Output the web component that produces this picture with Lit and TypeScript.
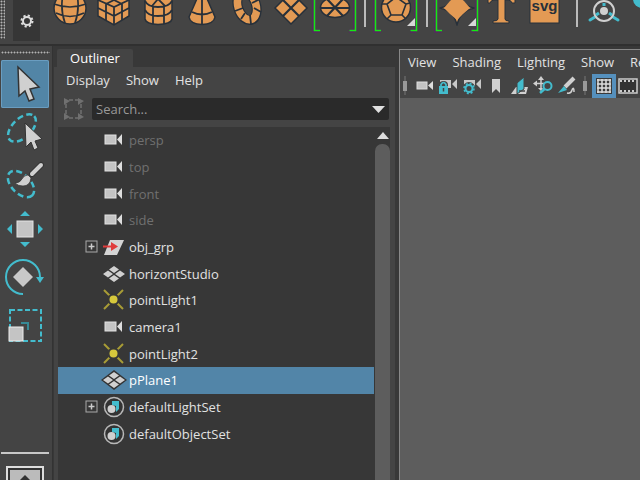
import { LitElement, html, svg, css, nothing, TemplateResult, SVGTemplateResult } from "lit";
import { customElement } from "lit/decorators.js";
import { classMap } from "lit/directives/class-map.js";

const OR = "#e39a54";
const EDGE = "#27303a";
const TEAL = "#43bccd";
const LIGHT = "#d0d0d0";

const icon = (w: number, h: number, body: SVGTemplateResult): TemplateResult =>
  html`<svg width=${w} height=${h} viewBox="0 0 ${w} ${h}" aria-hidden="true">${body}</svg>`;

const brackets = svg`
  <path d="M4 -2V31H10M39 31H45M45 31V-2" transform="translate(-2 0)" fill="none" stroke="#552b5c" stroke-width="4"/>
  <path d="M2.500 -2V30.500H8M37.500 30.500H43.500V-2" fill="none" stroke="#15e815" stroke-width="1.600"/>`;
const corner = svg`<path d="M41 18V26H33Z" fill="#d8d8d8"/>`;

const shelfArt: Record<string, SVGTemplateResult> = {
  Sphere: svg`<circle cx="22" cy="8" r="16" fill=${OR} stroke=${EDGE} stroke-width="1.500"/>
    <path d="M6 4Q22 10 38 4M8 13Q22 20 36 13M15 -6Q12 10 17 23M29 -6Q32 10 27 23" fill="none" stroke=${EDGE} stroke-width="1.700"/>`,
  Cube: svg`<path d="M6 0L22 -8L37 0V16L22 25L6 16Z" fill=${OR} stroke=${EDGE} stroke-width="1.500"/>
    <path d="M6 0L22 7L37 0M22 7V25M6 8L22 16L37 8M14 3V20M30 3V20M14 -4L30 4M30 -4L14 4" fill="none" stroke=${EDGE} stroke-width="1.800"/>`,
  Cylinder: svg`<path d="M9 -3H36V19Q35 24 22 24.500Q10 24 9 19Z" fill=${OR} stroke=${EDGE} stroke-width="1.500"/>
    <path d="M9 1Q12 7 22 7Q33 7 36 1M9 10Q12 16 22 16Q33 16 36 10M17 6V24M28 6V24M16 6L22 -1L29 6" fill="none" stroke=${EDGE} stroke-width="1.800"/>`,
  Cone: svg`<path d="M19 -6L9 17Q10 24 22 24.500Q34 24 35 17L25 -6Z" fill=${OR} stroke=${EDGE} stroke-width="1.500"/>
    <path d="M22 -3V24M12 12Q22 17 32 12" fill="none" stroke=${EDGE} stroke-width="1.800"/>`,
  Torus: svg`<ellipse cx="23" cy="6" rx="9" ry="14.500" transform="rotate(-18 23 6)" fill="none" stroke=${EDGE} stroke-width="10"/>
    <ellipse cx="23" cy="6" rx="9" ry="14" transform="rotate(-18 23 6)" fill="none" stroke=${OR} stroke-width="7.500"/>
    <path d="M11 11L19 8M19 -1L12 -3M26 15L27 24M30 8L37 12M28 3L36 -1M21 13L17 19" stroke=${EDGE} stroke-width="1.800"/>`,
  Plane: svg`<path d="M23 -8L39 8L23 24L7 8Z" fill=${OR} stroke=${EDGE} stroke-width="1.500"/>
    <path d="M15 0L31 16M31 0L15 16" stroke=${EDGE} stroke-width="2.200"/>`,
  Disc: svg`${brackets}<ellipse cx="23" cy="7.500" rx="14.500" ry="10" fill=${OR} stroke=${EDGE} stroke-width="1.500"/>
    <path d="M9 8H37M15 -1L31 16M31 -1L15 16" stroke=${EDGE} stroke-width="2.200"/>`,
  "Platonic solid": svg`<g transform="translate(-1 0)">${brackets}</g><circle cx="22" cy="7.500" r="14.500" fill=${OR} stroke=${EDGE} stroke-width="1.500"/>
    <path d="M22 -3L32 4L28 15H17L13 4ZM32 4L36 3M28 15L32 19M17 15L13 19M13 4L8 4M22 -2V-7" fill="none" stroke=${EDGE} stroke-width="1.600"/>${corner}`,
  "Super shape": svg`<g transform="translate(-2 0)">${brackets}</g>
    <path d="M21 -9Q24 5 38 8Q24 11 21 25Q18 11 4 8Q18 5 21 -9Z" fill=${OR} stroke=${EDGE} stroke-width="1.500" stroke-linejoin="round"/><path d="M21 -5L28 1L34 8L27 14L21 20L14 14L8 8L14 1Z" fill=${OR}/><g transform="translate(-1 0)">${corner}</g>`,
  Type: svg`<path d="M8 -5H35V3H32Q31 0 28 0H25V19Q25 21 29 21V23H13V21Q18 21 18 19V0H14Q11 0 10 3H8Z" fill=${OR} stroke=${EDGE}/>`,
  SVG: svg`<rect x="6" y="-6" width="29" height="29" fill=${OR} stroke=${EDGE}/><text x="20.500" y="11" text-anchor="middle" class="svgword">svg</text>`,
  Joint: svg`<path d="M4 20L9 17M27 17L32 20" stroke=${TEAL} stroke-width="3" stroke-linecap="round"/>
    <circle cx="18" cy="11" r="10" fill="none" stroke=${LIGHT} stroke-width="2"/><circle cx="18" cy="11" r="4" fill=${LIGHT}/>
    <path d="M10 15L13 13M23 13L26 15M18 3V6" stroke=${TEAL} stroke-width="3"/>`,
  Skin: svg`<circle cx="12" cy="-1" r="9" fill=${TEAL}/>`,
};

const shelf = ["Sphere", "Cube", "Cylinder", "Cone", "Torus", "Plane", "Disc", "|", "Platonic solid", "|", "Super shape", "Type", "SVG", "|", "Joint", "Skin"];

const OUT = "#333";
const tools: [string, SVGTemplateResult][] = [
  ["Select", svg`<path d="M17 7L18 36L24 31L28 41L33 39L29 29L38 27Z" fill=${LIGHT} stroke=${OUT} stroke-width="1.500"/>`],
  ["Lasso", svg`<ellipse cx="21" cy="20" rx="17" ry="9.500" transform="rotate(-44 21 20)" fill="none" stroke=${TEAL} stroke-width="2.500" stroke-dasharray="6 3.500"/>
    <path d="M24 15L25 39L30 34L33 42L37 40L34 33L41 31Z" fill=${LIGHT} stroke=${OUT}/>`],
  ["Paint select", svg`<ellipse cx="20" cy="28" rx="16" ry="9.500" transform="rotate(45 20 28)" fill="none" stroke=${TEAL} stroke-width="2.500" stroke-dasharray="6 3.500"/>
    <path d="M40 9L31 18" stroke=${OUT} stroke-width="6" stroke-linecap="round"/><path d="M40 9L31 18" stroke=${LIGHT} stroke-width="4" stroke-linecap="round"/>
    <path d="M27 19L30 22Q29 30 22 30Q17 30 14 27Q19 27 21 23Q23 19 27 19Z" fill=${LIGHT} stroke=${OUT} stroke-width=".7"/>`],
  ["Move", svg`<rect x="16" y="17" width="16" height="16" fill="#c4c4c4" stroke="#e4e4e4"/>
    <path d="M24 7L29 12H19ZM24 43L29 38H19ZM6 25L11 20V30ZM42 25L37 20V30Z" fill=${TEAL}/>`],
  ["Rotate", svg`<path d="M22 42A17 17 0 1 1 39 25" fill="none" stroke=${TEAL} stroke-width="2"/><path d="M35 25H43L39 31Z" fill=${TEAL}/>
    <path d="M22 15L32 25L22 35L12 25Z" fill="#c8c8c8"/>`],
  ["Scale", svg`<rect x="9" y="10" width="31" height="31" fill="none" stroke=${TEAL} stroke-width="2" stroke-dasharray="5 2.500"/>
    <path d="M20 23H27V30" fill="none" stroke="#378a96" stroke-width="2"/><rect x="8" y="27" width="14" height="14" fill="#c4c4c4" stroke="#eee"/>`],
];

const cam = svg`<rect x="2" y="5" width="11" height="9" fill="#c4c4c4" stroke="#e2e2e2"/><path d="M14 9.500L19 4V15Z" fill="#ddd"/>`;
const light = svg`<path d="M1 0L20 19M20 0L1 19" stroke="#a89c36" stroke-width="2"/><circle cx="10.500" cy="9.500" r="6" fill="#373737"/><circle cx="10.500" cy="9.500" r="4" fill="#d6c83c"/>`;
const tiles = svg`<path d="M11 2L16 5.500L11 9L6 5.500ZM11 11L16 14.500L11 18L6 14.500ZM5 6.500L10 10L5 13.500L0 10ZM17 6.500L22 10L17 13.500L12 10Z" fill=${LIGHT}/>`;
const art: Record<string, SVGTemplateResult> = {
  cam,
  light,
  mesh: tiles,
  meshOn: svg`<path d="M11 0L24 10L11 20L-2 10Z" fill="#333"/>${tiles}`,
  group: svg`<path d="M7 3H21L14 18H1Z" fill="#d4d4d4"/><path d="M0 9.500H9" stroke="#e03c3c" stroke-width="2"/><path d="M8 5L15 9.500L8 14Z" fill="#e03c3c"/>`,
  set: svg`<circle cx="11" cy="10" r="9.500" fill="#333" stroke="#b8b8b8" stroke-width="1.500"/><path d="M9 4H16V12L13 15V9L9 8Z" fill=${TEAL}/><circle cx="8.500" cy="12" r="4" fill=${LIGHT}/>`,
};

interface Node { name: string; kind: string; dim?: boolean; expand?: boolean; selected?: boolean; }
const nodes: Node[] = [
  { name: "persp", kind: "cam", dim: true },
  { name: "top", kind: "cam", dim: true },
  { name: "front", kind: "cam", dim: true },
  { name: "side", kind: "cam", dim: true },
  { name: "obj_grp", kind: "group", expand: true },
  { name: "horizontStudio", kind: "mesh" },
  { name: "pointLight1", kind: "light" },
  { name: "camera1", kind: "cam" },
  { name: "pointLight2", kind: "light" },
  { name: "pPlane1", kind: "meshOn", selected: true },
  { name: "defaultLightSet", kind: "set", expand: true },
  { name: "defaultObjectSet", kind: "set" },
];

const smallCam = svg`<path d="M4 6H15V14H4ZM16 10L21 5V15Z" fill="#c8c8c8"/>`;
const handle = html`<span class="handle">${icon(12, 24, svg`<path d="M5 2V21" stroke="#777"/><rect x="3" y="7" width="4" height="10" fill="#999"/>`)}</span>`;
const viewTools: [string, SVGTemplateResult][] = [
  ["Camera", svg`<rect x="5" y="8" width="10" height="7" fill="#c4c4c4" stroke="#ddd"/><path d="M16 11.500L21 7V16Z" fill="#ddd"/>`],
  ["Lock camera", svg`${smallCam}<path d="M3 20V11Q3 7 7.500 7Q12 7 12 11V20Z" fill="#444"/><path d="M5 12V10.500Q7.500 6.500 10 10.500V12" fill="none" stroke=${TEAL} stroke-width="1.700"/><rect x="3" y="12" width="9" height="8" fill=${TEAL}/><path d="M7.500 14V17.500" stroke="#444" stroke-width="1.500"/>`],
  ["Camera settings", svg`${smallCam}<circle cx="9" cy="14.500" r="6.500" fill="#444"/><circle cx="9" cy="14.500" r="3.500" fill="none" stroke=${TEAL} stroke-width="2"/><circle cx="9" cy="14.500" r="5" fill="none" stroke=${TEAL} stroke-width="1.500" stroke-dasharray="2 1.930"/>`],
  ["Bookmark", svg`<path d="M8 5H16V19L12 15L8 19Z" fill=${LIGHT}/>`],
  ["Image plane", svg`<path d="M3 20L8 13H20L18 20Z" fill=${LIGHT}/><path d="M9 9L16 3V15L9 20Z" fill=${TEAL} stroke="#444"/><path d="M11 17H17" stroke="#444" stroke-width="1.500"/>`],
  ["Pan and zoom", svg`<path d="M9 5V14M4 9.500H14" stroke=${LIGHT} stroke-width="1.500"/><path d="M9 2L12 6H6ZM1 9.500L5 6.500V12.500ZM9 17L6 14H11Z" fill=${LIGHT}/><circle cx="15.500" cy="12" r="4" fill="#444" stroke=${TEAL} stroke-width="2"/><path d="M12.500 15L8 19" stroke=${TEAL} stroke-width="2.500"/>`],
  ["Grease pencil", svg`<path d="M18 4L9 13" stroke=${LIGHT} stroke-width="4"/><path d="M8 12L11 16L2 19Z" fill=${TEAL}/><path d="M11 19Q15 20 16 16Q18 12 18 18" fill="none" stroke=${LIGHT} stroke-width="1.500"/>`],
];

@customElement("app-root")
export class AppRoot extends LitElement {
  static styles = css`
    :host { display: flex; flex-direction: column; height: 100vh; overflow: hidden; background: #383838; color: #e2e2e2; font: 13px/18px "Open Sans", "Noto Sans", sans-serif; }
    * { box-sizing: border-box; }
    svg { display: block; flex: none; overflow: visible; }
    button { display: grid; place-items: center; flex: none; padding: 0; border: 0; background: none; color: inherit; font: inherit; }
    .svgword { font: bold 15px "Liberation Sans", sans-serif; fill: #27303a; }
    .shelf { display: flex; flex: none; height: 44px; background: #444; overflow: hidden; }
    .grip { flex: none; width: 5px; height: 39px; background: radial-gradient(circle, #b4b4b4 30%, transparent 60%) 0 0 / 3px 3px; }
    .gear { width: 27px; height: 41px; margin: 0 8px; background: #363636; }
    .item { width: 44px; height: 32px; }
    .bar { flex: none; width: 2px; height: 27px; margin: 0 8px; background: #bbb; }
    .work { display: flex; flex: 1; min-height: 0; border-top: 2px solid #303030; }
    .toolbox { display: flex; flex-direction: column; flex: none; width: 53px; padding: 5px 0 0 1px; background: #444; border-right: 1px solid #333; }
    .dots { flex: none; height: 3px; margin: 0 2px 6px 0; background: radial-gradient(circle, #b4b4b4 30%, transparent 60%) 0 0 / 3px 3px; }
    .tool { width: 48px; height: 48px; border-radius: 2px; }
    .tool.on { background: #5285a6; box-shadow: inset 0 0 0 1px #6a9dc0; }
    .rule { flex: none; width: 48px; height: 2px; margin: 104px 0 12px; background: #c8c8c8; }
    .layout { width: 38px; height: 38px; margin-left: 5px; border: 2px solid #ddd; background: #333; }
    .outliner { display: flex; flex-direction: column; flex: 1 1 341px; min-width: 0; padding: 3px 0 0 1px; }
    .tab { align-self: flex-start; width: 76px; height: 18px; margin-left: 3px; background: #444; border-radius: 2px 2px 0 0; color: #fff; line-height: 18px; text-align: center; }
    .body { display: flex; flex-direction: column; flex: 1; min-height: 0; padding: 4px 5px 0 4px; background: #444; }
    .menus { display: flex; gap: 16px; padding: 0 8px; overflow: hidden; }
    .search { display: flex; align-items: center; gap: 8px; margin: 8px 1px 6px 5px; }
    .field { display: flex; align-items: center; flex: 1; height: 22px; padding: 0 4px; background: #2a2a2a; border-radius: 2px; }
    input { flex: 1; min-width: 0; padding: 0; border: 0; outline: 0; background: none; color: #ccc; font: inherit; }
    input::placeholder { color: #999; opacity: 1; }
    .tree { display: flex; flex: 1; min-height: 0; background: #373737; overflow: hidden; }
    ul { display: grid; grid-auto-rows: 1fr; flex: 1; height: 320px; margin: 0; padding: 0; list-style: none; }
    li { display: flex; align-items: center; padding-left: 27px; }
    li.dim { color: #707070; }
    li.selected { background: #5285a8; color: #fff; }
    .twist { width: 13px; height: 20px; margin-right: 5px; }
    .name { padding-left: 4px; }
    .scroll { display: flex; flex-direction: column; align-items: center; width: 15px; margin-left: 1px; padding-top: 5px; }
    .thumb { align-self: stretch; flex: 1; margin-top: 5px; background: #5d5d5d; border-radius: 7px 7px 0 0; }
    .view { display: flex; flex-direction: column; flex: 1 1 240px; min-width: 0; margin: 3px 0 0 4px; border: solid #888; border-width: 1px 0 0 1px; background: #5d5d5d; }
    .head { flex: none; height: 48px; padding-top: 3px; background: #444; }
    .icons { display: flex; margin-top: 3px; overflow: hidden; }
    .vt { width: 24px; height: 24px; }
    .vt.on { background: #5590bd; }
  `;

  private viewButton = (label: string, body: SVGTemplateResult, on = false) =>
    html`<button class=${classMap({ vt: true, on })} aria-label=${label}>${icon(24, 24, body)}</button>`;

  render() {
    return html`
      <header class="shelf">
        <div class="grip"></div>
        <button class="gear" aria-label="Shelf settings">${icon(14, 42, svg`<circle cx="7" cy="21" r="4" fill="none" stroke="#ddd" stroke-width="2"/><circle cx="7" cy="21" r="5.500" fill="none" stroke="#ddd" stroke-width="2" stroke-dasharray="2.200 2.120"/>`)}</button>
        ${shelf.map((name) => name === "|" ? html`<span class="bar"></span>` : html`<button class="item" aria-label=${name}>${icon(44, 32, shelfArt[name])}</button>`)}
      </header>
      <main class="work">
        <nav class="toolbox" aria-label="Tools">
          <div class="dots"></div>
          ${tools.map(([name, body], i) => html`<button class=${classMap({ tool: true, on: i === 0 })} aria-label=${name}>${icon(48, 48, body)}</button>`)}
          <div class="rule"></div>
          <button class="layout" aria-label="Single pane layout">${icon(30, 30, svg`<rect x="0" y="0" width="30" height="30" fill="#bbb"/><path d="M15 5L20 10V14H10V10Z" fill="#333"/>`)}</button>
        </nav>
        <section class="outliner" aria-label="Outliner">
          <button class="tab">Outliner</button>
          <div class="body">
            <div class="menus">${["Display", "Show", "Help"].map((m) => html`<button>${m}</button>`)}</div>
            <div class="search">
              ${icon(21, 24, svg`<path d="M6 3H15M6 21H15M3 7V17M18 7V17" fill="none" stroke="#707070" stroke-width="1.500" stroke-dasharray="4 2"/><path d="M1 1L7 4L1 8ZM15 1L21 4L15 8ZM1 16L7 20L1 23ZM15 16L21 20L15 23Z" fill="#707070"/>`)}
              <div class="field">
                <input type="text" aria-label="Search" placeholder="Search..." />
                <button aria-label="Filter">${icon(13, 7, svg`<path d="M0 0H13L6.500 7Z" fill="#e0e0e0"/>`)}</button>
              </div>
            </div>
            <div class="tree">
              <ul>
                ${nodes.map((n) => html`<li class=${classMap({ dim: !!n.dim, selected: !!n.selected })}>
                  <span class="twist">${n.expand ? icon(13, 20, svg`<rect x="1" y="4" width="11" height="11" fill="none" stroke="#aaa"/><path d="M3.500 9.500H9.500M6.500 6.500V12.500" stroke="#ccc" stroke-width="1.500"/>`) : nothing}</span>
                  ${icon(22, 20, art[n.kind])}<span class="name">${n.name}</span>
                </li>`)}
              </ul>
              <div class="scroll">${icon(12, 7, svg`<path d="M0 7H12L6 0Z" fill="#ddd"/>`)}<div class="thumb"></div></div>
            </div>
          </div>
        </section>
        <section class="view" aria-label="Viewport">
          <div class="head">
            <div class="menus">${["View", "Shading", "Lighting", "Show", "Renderer"].map((m) => html`<button>${m}</button>`)}</div>
            <div class="icons">
              ${handle}${viewTools.map(([name, body]) => this.viewButton(name, body))}${handle}
              ${this.viewButton("Grid", svg`<rect x="4" y="4" width="16" height="16" fill="#3a3a3a"/><path d="M6 5V19M10 5V19M14 5V19M18 5V19M5 6H19M5 10H19M5 14H19M5 18H19" stroke="#ddd" stroke-width="1.500"/>`, true)}
              ${this.viewButton("Film gate", svg`<rect x="3" y="5" width="18" height="14" fill="#333" stroke="#ccc" stroke-width="1.500"/><path d="M4 7H20M4 17H20" stroke="#ccc" stroke-width="2" stroke-dasharray="2 2"/>`)}
            </div>
          </div>
        </section>
      </main>`;
  }
}
